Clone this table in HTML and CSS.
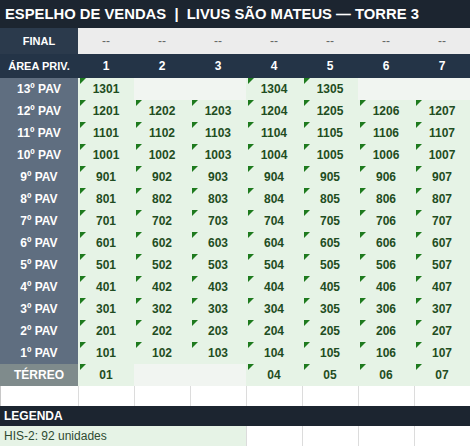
FILE: index.html
```html
<!DOCTYPE html>
<html lang="pt">
<head>
    <meta charset="UTF-8">
    <title>Espelho de Vendas</title>
    <link rel="stylesheet" href="styles.css">
</head>
<body>
    <div class="sheet">
        <div class="title">ESPELHO DE VENDAS &nbsp;|&nbsp; LIVUS SÃO MATEUS — TORRE 3</div>

        <div class="row row-final">
            <div class="label">FINAL</div>
            <div class="dash">--</div><div class="dash">--</div><div class="dash">--</div><div class="dash">--</div>
            <div class="dash">--</div><div class="dash">--</div><div class="dash">--</div>
        </div>

        <div class="row row-area">
            <div class="label">ÁREA PRIV.</div>
            <div>1</div><div>2</div><div>3</div><div>4</div><div>5</div><div>6</div><div>7</div>
        </div>

        <div class="row floor">
            <div class="label">13º PAV</div>
            <div class="unit">1301</div><div class="empty"></div><div class="empty"></div>
            <div class="unit">1304</div><div class="unit">1305</div><div class="empty"></div><div class="empty"></div>
        </div>
        <div class="row floor">
            <div class="label">12º PAV</div>
            <div class="unit">1201</div><div class="unit">1202</div><div class="unit">1203</div><div class="unit">1204</div>
            <div class="unit">1205</div><div class="unit">1206</div><div class="unit">1207</div>
        </div>
        <div class="row floor">
            <div class="label">11º PAV</div>
            <div class="unit">1101</div><div class="unit">1102</div><div class="unit">1103</div><div class="unit">1104</div>
            <div class="unit">1105</div><div class="unit">1106</div><div class="unit">1107</div>
        </div>
        <div class="row floor">
            <div class="label">10º PAV</div>
            <div class="unit">1001</div><div class="unit">1002</div><div class="unit">1003</div><div class="unit">1004</div>
            <div class="unit">1005</div><div class="unit">1006</div><div class="unit">1007</div>
        </div>
        <div class="row floor">
            <div class="label">9º PAV</div>
            <div class="unit">901</div><div class="unit">902</div><div class="unit">903</div><div class="unit">904</div>
            <div class="unit">905</div><div class="unit">906</div><div class="unit">907</div>
        </div>
        <div class="row floor">
            <div class="label">8º PAV</div>
            <div class="unit">801</div><div class="unit">802</div><div class="unit">803</div><div class="unit">804</div>
            <div class="unit">805</div><div class="unit">806</div><div class="unit">807</div>
        </div>
        <div class="row floor">
            <div class="label">7º PAV</div>
            <div class="unit">701</div><div class="unit">702</div><div class="unit">703</div><div class="unit">704</div>
            <div class="unit">705</div><div class="unit">706</div><div class="unit">707</div>
        </div>
        <div class="row floor">
            <div class="label">6º PAV</div>
            <div class="unit">601</div><div class="unit">602</div><div class="unit">603</div><div class="unit">604</div>
            <div class="unit">605</div><div class="unit">606</div><div class="unit">607</div>
        </div>
        <div class="row floor">
            <div class="label">5º PAV</div>
            <div class="unit">501</div><div class="unit">502</div><div class="unit">503</div><div class="unit">504</div>
            <div class="unit">505</div><div class="unit">506</div><div class="unit">507</div>
        </div>
        <div class="row floor">
            <div class="label">4º PAV</div>
            <div class="unit">401</div><div class="unit">402</div><div class="unit">403</div><div class="unit">404</div>
            <div class="unit">405</div><div class="unit">406</div><div class="unit">407</div>
        </div>
        <div class="row floor">
            <div class="label">3º PAV</div>
            <div class="unit">301</div><div class="unit">302</div><div class="unit">303</div><div class="unit">304</div>
            <div class="unit">305</div><div class="unit">306</div><div class="unit">307</div>
        </div>
        <div class="row floor">
            <div class="label">2º PAV</div>
            <div class="unit">201</div><div class="unit">202</div><div class="unit">203</div><div class="unit">204</div>
            <div class="unit">205</div><div class="unit">206</div><div class="unit">207</div>
        </div>
        <div class="row floor">
            <div class="label">1º PAV</div>
            <div class="unit">101</div><div class="unit">102</div><div class="unit">103</div><div class="unit">104</div>
            <div class="unit">105</div><div class="unit">106</div><div class="unit">107</div>
        </div>
        <div class="row floor">
            <div class="label ground">TÉRREO</div>
            <div class="unit">01</div><div class="empty"></div><div class="empty"></div>
            <div class="unit">04</div><div class="unit">05</div><div class="unit">06</div><div class="unit">07</div>
        </div>

        <div class="row blank">
            <div></div><div></div><div></div><div></div><div></div><div></div><div></div><div></div>
        </div>

        <div class="legend-title">LEGENDA</div>

        <div class="row legend">
            <div class="legend-item">HIS-2: 92 unidades</div>
            <div></div><div></div><div></div><div></div>
        </div>
    </div>
</body>
</html>
```

FILE: styles.css
```css
body {
    margin: 0;
    background: #fff;
    font-family: "Liberation Sans", Arial, sans-serif;
}

.sheet {
    width: 470px;
}

.title {
    height: 28px;
    line-height: 28px;
    padding-left: 5px;
    background: #1c2530;
    color: #fff;
    font-size: 14.8px;
    font-weight: bold;
    white-space: nowrap;
    overflow: hidden;
}

.row {
    display: grid;
    grid-template-columns: 78px repeat(7, 56px);
}

.row > div {
    display: flex;
    align-items: center;
    justify-content: center;
    font-size: 12px;
    font-weight: bold;
}

.label {
    color: #fff;
}

/* FINAL row */
.row-final {
    height: 26px;
}

.row-final .label {
    background: #2b3a4c;
}

.row-final > .label,
.row-area > .label {
    font-size: 11px;
}

.row-final .dash {
    background: #ececec;
    color: #666;
    font-weight: normal;
}

/* header row */
.row-area {
    height: 24px;
    background: #243447;
    color: #fff;
}

/* floors */
.floor {
    height: 22px;
}

.floor .label {
    background: #5f6e80;
}

.floor .label.ground {
    background: #7f8b8c;
}

.unit {
    position: relative;
    background: #e6f3e6;
    color: #1f4d22;
}

/* little corner flag */
.unit::before {
    content: "";
    position: absolute;
    top: 0;
    left: 2px;
    border-top: 6px solid #1e7a1e;
    border-right: 6px solid transparent;
}

.empty {
    background: #f1f5f1;
}

/* blank spacer row */
.blank {
    height: 20px;
}

.blank > div,
.legend > div {
    border-left: 1px solid #dcdcdc;
}

.blank > div:first-child {
    border-left: 1px solid #c8c8c8;
}

.legend-title {
    height: 20px;
    line-height: 20px;
    padding-left: 4px;
    background: #1c2530;
    color: #fff;
    font-size: 12px;
    font-weight: bold;
}

.legend {
    height: 20px;
    grid-template-columns: 246px repeat(4, 56px);
}

.legend > div.legend-item {
    justify-content: flex-start;
    padding-left: 4px;
    background: #e6f3e6;
    color: #2f4a32;
    font-weight: normal;
    border-left: none;
}
```
